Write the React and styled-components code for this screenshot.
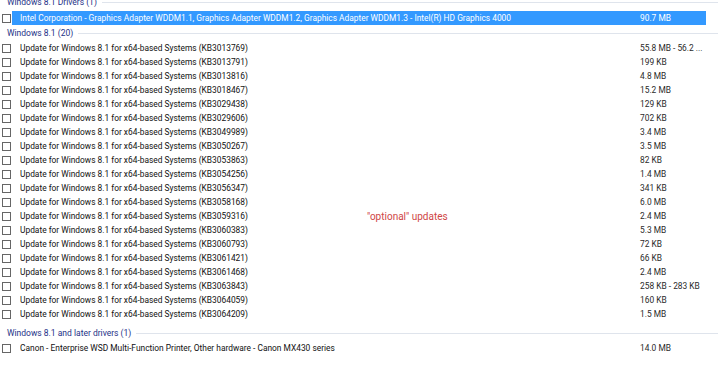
import React from "react";
import styled, { createGlobalStyle } from "styled-components";

const GlobalStyle = createGlobalStyle`
  html, body { margin: 0; padding: 0; background: #ffffff; }
  body { overflow: hidden; font-family: Roboto, "Open Sans", sans-serif; }
`;

const Viewport = styled.div`
  position: relative;
  width: 718px;
  height: 384px;
  overflow: hidden;
  background: #fff;
`;

const List = styled.div`
  display: flex;
  flex-direction: column;
  margin-top: -5px;
`;

const Group = styled.section`
  display: flex;
  flex-direction: column;
  margin-top: ${(p) => p.$gap || 0}px;
`;

const GroupHeader = styled.div`
  display: flex;
  align-items: center;
  gap: 5px;
  height: 16px;
  padding-left: 7px;
  padding-bottom: ${(p) => p.$lift || 0}px;
  box-sizing: border-box;
  font-size: 8.5px;
  color: #1e3287;
  white-space: nowrap;
  &::after {
    content: "";
    flex: 1;
    height: 1px;
    background: #dfe4ec;
  }
`;

const Row = styled.div`
  display: flex;
  align-items: center;
  height: 14px;
`;

const Check = styled.span`
  box-sizing: border-box;
  width: 9px;
  height: 9px;
  margin-left: 2px;
  border: 1px solid #666666;
  background: #fff;
  flex: none;
`;

const RowBody = styled.div`
  display: flex;
  align-items: center;
  flex: 1;
  height: 14px;
  margin-left: 1px;
  margin-right: 12px;
  padding-left: 8px;
  font-size: 8.4px;
  color: ${(p) => (p.$selected ? "#ffffff" : "#111111")};
  background: ${(p) => (p.$selected ? "#3399ff" : "transparent")};
  white-space: nowrap;
`;

const Name = styled.span`
  flex: 1;
  overflow: hidden;
`;

const Size = styled.span`
  flex: none;
  width: 66px;
  color: ${(p) => (p.$selected ? "#ffffff" : "#2a2a2a")};
`;

const Annotation = styled.div`
  position: absolute;
  left: 367px;
  top: 211px;
  font-size: 10px;
  color: #cf4646;
  white-space: nowrap;
`;

const updates = [
  ["KB3013769", "55.8 MB - 56.2 ..."],
  ["KB3013791", "199 KB"],
  ["KB3013816", "4.8 MB"],
  ["KB3018467", "15.2 MB"],
  ["KB3029438", "129 KB"],
  ["KB3029606", "702 KB"],
  ["KB3049989", "3.4 MB"],
  ["KB3050267", "3.5 MB"],
  ["KB3053863", "82 KB"],
  ["KB3054256", "1.4 MB"],
  ["KB3056347", "341 KB"],
  ["KB3058168", "6.0 MB"],
  ["KB3059316", "2.4 MB"],
  ["KB3060383", "5.3 MB"],
  ["KB3060793", "72 KB"],
  ["KB3061421", "66 KB"],
  ["KB3061468", "2.4 MB"],
  ["KB3063843", "258 KB - 283 KB"],
  ["KB3064059", "160 KB"],
  ["KB3064209", "1.5 MB"],
];

function Item({ name, size, selected }) {
  return (
    <Row>
      <Check />
      <RowBody $selected={selected}>
        <Name>{name}</Name>
        <Size $selected={selected}>{size}</Size>
      </RowBody>
    </Row>
  );
}

export default function App() {
  return (
    <>
      <GlobalStyle />
      <Viewport>
        <List>
          <Group>
            <GroupHeader $lift={2}>Windows 8.1 Drivers (1)</GroupHeader>
            <Item
              selected
              name="Intel Corporation - Graphics Adapter WDDM1.1, Graphics Adapter WDDM1.2, Graphics Adapter WDDM1.3 - Intel(R) HD Graphics 4000"
              size="90.7 MB"
            />
          </Group>
          <Group>
            <GroupHeader>Windows 8.1 (20)</GroupHeader>
            {updates.map(([kb, size]) => (
              <Item
                key={kb}
                name={`Update for Windows 8.1 for x64-based Systems (${kb})`}
                size={size}
              />
            ))}
          </Group>
          <Group $gap={4}>
            <GroupHeader>Windows 8.1 and later drivers (1)</GroupHeader>
            <Item
              name="Canon - Enterprise WSD Multi-Function Printer, Other hardware - Canon MX430 series"
              size="14.0 MB"
            />
          </Group>
        </List>
        <Annotation>"optional" updates</Annotation>
      </Viewport>
    </>
  );
}
